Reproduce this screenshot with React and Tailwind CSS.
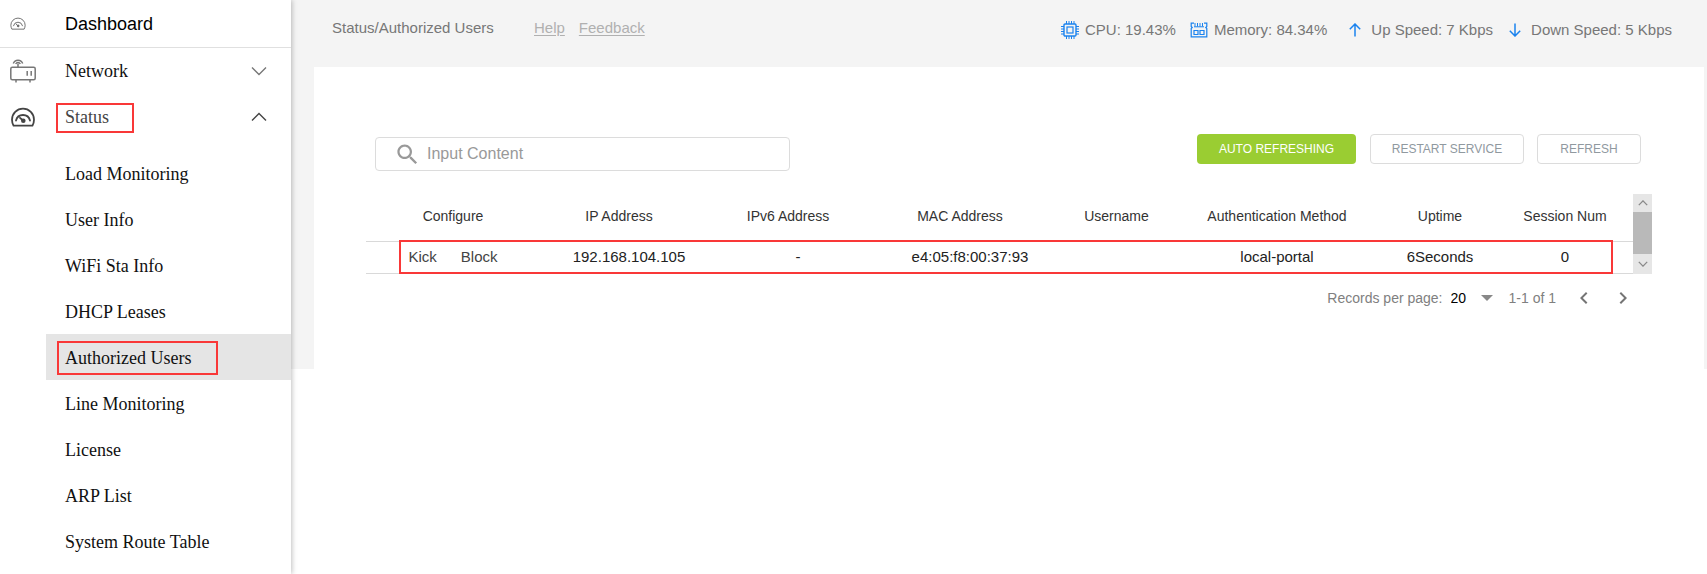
import React, { useState } from "react";

const menuItems = [
  "Load Monitoring",
  "User Info",
  "WiFi Sta Info",
  "DHCP Leases",
  "Authorized Users",
  "Line Monitoring",
  "License",
  "ARP List",
  "System Route Table",
];

const columns = [
  { label: "Configure", width: "w-[174px]" },
  { label: "IP Address", width: "w-[178px]", head: "pr-5" },
  { label: "IPv6 Address", width: "w-[160px]", head: "pr-5" },
  { label: "MAC Address", width: "w-[164px]" },
  { label: "Username", width: "w-[149px]" },
  { label: "Authentication Method", width: "w-[172px]" },
  { label: "Uptime", width: "w-[154px]" },
  { label: "Session Num", width: "w-[116px]", head: "pr-5" },
];

const users = [
  {
    ip: "192.168.104.105",
    ipv6: "-",
    mac: "e4:05:f8:00:37:93",
    username: "",
    method: "local-portal",
    uptime: "6Seconds",
    sessions: 0,
  },
];

function GaugeIcon({ className, strokeWidth = 1.8 }) {
  return (
    <svg viewBox="0 0 24 20" className={className} fill="none" stroke="currentColor" strokeWidth={strokeWidth} aria-hidden="true">
      <path d="M2.6 18.7h18.8c1-1.8 1.6-3.9 1.600-6a11 11 0 0 0-22 0c0 2.100.6 4.200 1.600 6z" strokeLinejoin="round" />
      <path d="M5 13.500a7.200 7.200 0 0 1 14 0" strokeLinecap="round" />
      <path d="M9 10.800l3 2.700" strokeLinecap="round" />
      <circle cx="12.300" cy="13.700" r="1.400" fill="currentColor" />
    </svg>
  );
}

function RouterIcon({ className }) {
  return (
    <svg viewBox="0 0 26 24" className={className} fill="none" stroke="currentColor" strokeWidth="1.5" aria-hidden="true">
      <rect x="0.8" y="8.300" width="24.400" height="12.500" rx="1.500" />
      <path d="M17.200 12v4.800M21.200 12v4.800M6 21v2.500M20 21v2.500M8 4.500v3.500" />
      <path d="M3.300 4.500a5 5 0 0 1 9.400 0M5.700 5a2.600 2.600 0 0 1 4.600 0" />
    </svg>
  );
}

function Chevron({ up, className, strokeWidth = 1.4 }) {
  return (
    <svg viewBox="0 0 16 10" className={className} fill="none" stroke="currentColor" strokeWidth={strokeWidth} aria-hidden="true">
      <path d={up ? "M1 8.500l7-7 7 7" : "M1 1.500l7 7 7-7"} />
    </svg>
  );
}

function CpuIcon() {
  return (
    <svg viewBox="0 0 18 18" className="size-[18px] text-[#1a82ee]" fill="none" stroke="currentColor" aria-hidden="true">
      <rect x="3" y="3" width="12" height="12" rx="1" strokeWidth="1.400" />
      <rect x="6" y="6" width="6" height="6" strokeWidth="1.200" />
      <path d="M5.500 0v3M8 0v3M10.500 0v3M13 0v3M5.500 15v3M8 15v3M10.500 15v3M13 15v3M0 5.500h3M0 8h3M0 10.500h3M0 13h3M15 5.500h3M15 8h3M15 10.500h3M15 13h3" />
    </svg>
  );
}

function MemoryIcon() {
  return (
    <svg viewBox="0 0 18 16" className="h-4 w-[18px] text-[#1a82ee]" fill="none" stroke="currentColor" aria-hidden="true">
      <path d="M4 1.200H1.200v3.300l1 1-1 1v8.300h15.600V6.500l-1-1 1-1V1.200H14" strokeWidth="1.200" />
      <path d="M5 1v3.500M7.500 1v3.500M10 1v3.500M12.500 1v3.500M4 4.800h10" />
      <path d="M4 8.500h4v4H4zM10 8.500h4v4h-4z" strokeWidth="1.200" />
    </svg>
  );
}

function ArrowIcon({ down }) {
  return (
    <svg viewBox="0 0 12 14" className="h-3.5 w-3" fill="none" stroke="#1a82ee" strokeWidth="1.500" aria-hidden="true">
      <path d={down ? "M6 .5v12.500M.8 7.800L6 13l5.200-5.200" : "M6 13.500V1M.8 6.200L6 1l5.200 5.200"} />
    </svg>
  );
}

function Sidebar() {
  return (
    <nav className="relative z-10 min-h-screen w-[291px] shrink-0 bg-white font-['Liberation_Serif',serif] text-lg text-[#111] shadow-[1px_0_5px_rgba(0,0,0,0.25)]">
      <a href="#dashboard" className="flex h-12 items-center border-b border-[#e0e0e0] font-['Liberation_Sans',sans-serif] text-black">
        <span className="w-[65px] pl-2.5">
          <GaugeIcon className="h-[13px] w-4 text-[#666]" strokeWidth={1.4} />
        </span>
        Dashboard
      </a>
      <button type="button" className="flex h-[46px] w-full items-center pr-6">
        <span className="w-[65px] pl-2.5">
          <RouterIcon className="h-6 w-[26px] text-[#777]" />
        </span>
        Network
        <Chevron className="ml-auto h-2.5 w-4 text-[#777]" />
      </button>
      <button type="button" aria-expanded="true" className="relative flex h-[46px] w-full items-center pr-6 text-[#444]">
        <span className="w-[65px] pl-[11px]">
          <GaugeIcon className="h-5 w-6" />
        </span>
        Status
        <Chevron up className="ml-auto h-2.5 w-4" />
        <span className="absolute top-[9px] left-14 h-[30px] w-[78px] border-2 border-[#f93838]" />
      </button>
      <ul className="mt-2.5">
        {menuItems.map((item) => (
          <li key={item} className="pl-[46px]">
            <a
              href="#status"
              className={`relative flex h-[46px] items-center pt-0.5 pl-[19px] ${item === "Authorized Users" ? "bg-[#e5e5e5]" : ""}`}
            >
              {item}
              {item === "Authorized Users" && (
                <span className="absolute top-[7px] left-[11px] h-[34px] w-[161px] border-2 border-[#f93838]" />
              )}
            </a>
          </li>
        ))}
      </ul>
    </nav>
  );
}

function TopBar() {
  return (
    <header className="flex h-[67px] items-start justify-between pr-8 pl-[41px] text-[15px] leading-6 text-[#777]">
      <div className="flex pt-4">
        <h1 className="w-[202px]">Status/Authorized Users</h1>
        <a href="#help" className="mr-3.5 text-[#b0b0b0] underline underline-offset-2">Help</a>
        <a href="#feedback" className="text-[#b0b0b0] underline underline-offset-2">Feedback</a>
      </div>
      <div className="flex gap-3.5 pt-[18px]">
        <span className="flex items-center gap-1.5"><CpuIcon />CPU: 19.43%</span>
        <span className="flex items-center gap-1.5"><MemoryIcon />Memory: 84.34%</span>
        <span className="ml-2 flex items-center gap-2.5"><ArrowIcon />Up Speed: 7 Kbps</span>
        <span className="ml-0.5 flex items-center gap-2.5"><ArrowIcon down />Down Speed: 5 Kbps</span>
      </div>
    </header>
  );
}

function UsersTable() {
  return (
    <div className="mx-[52px] flex">
      <div className="relative min-w-0 flex-1">
        <table className="w-full table-fixed border-b border-[#d9d9d9] text-center text-[#222]">
          <thead>
            <tr className="h-[47px] border-b border-[#d9d9d9] text-sm text-[#333]">
              {columns.map((col) => (
                <th key={col.label} className={`pb-0.5 font-normal ${col.width} ${col.head || ""}`}>
                  {col.label}
                </th>
              ))}
            </tr>
          </thead>
          <tbody>
            {users.map((user) => (
              <tr key={user.ip} className="h-8 text-[15px]">
                <td className="text-[#444]">
                  <button type="button" className="mr-6">Kick</button>
                  <button type="button">Block</button>
                </td>
                <td>{user.ip}</td>
                <td>{user.ipv6}</td>
                <td className="pl-5">{user.mac}</td>
                <td>{user.username}</td>
                <td>{user.method}</td>
                <td>{user.uptime}</td>
                <td className="pr-5">{user.sessions}</td>
              </tr>
            ))}
          </tbody>
        </table>
        <span className="pointer-events-none absolute right-5 bottom-0 left-[33px] h-[34px] border-2 border-[#f93838]" />
      </div>
      <div className="flex w-[19px] flex-col bg-[#e6e6e6] text-[#888]">
        <button type="button" aria-label="Scroll up" className="flex h-[18px] items-center justify-center">
          <Chevron up className="h-1.5 w-2.5" strokeWidth={2.2} />
        </button>
        <div className="flex-1 bg-[#b9b9b9]" />
        <button type="button" aria-label="Scroll down" className="flex h-5 items-center justify-center">
          <Chevron className="h-1.5 w-2.5" strokeWidth={2.2} />
        </button>
      </div>
    </div>
  );
}

function Pagination() {
  const [perPage, setPerPage] = useState("20");

  return (
    <div className="mt-3 flex items-center justify-end pr-[69px] text-sm leading-6 text-[#808080]">
      <label htmlFor="per-page" className="mr-2">Records per page:</label>
      <div className="relative mr-4">
        <select
          id="per-page"
          value={perPage}
          onChange={(e) => setPerPage(e.target.value)}
          className="w-[42px] appearance-none bg-transparent text-black"
        >
          <option>20</option>
          <option>50</option>
        </select>
        <svg viewBox="0 0 12 6" className="pointer-events-none absolute top-[9px] right-0 h-1.5 w-3" fill="#888" aria-hidden="true">
          <path d="M0 0h12l-6 6z" />
        </svg>
      </div>
      <span className="mr-4">1-1 of 1</span>
      <button type="button" aria-label="Previous page" className="mr-[15px] p-0">
        <svg viewBox="0 0 24 24" className="size-6" fill="#757575" aria-hidden="true">
          <path d="M15.410 7.410L14 6l-6 6 6 6 1.410-1.410L10.830 12z" />
        </svg>
      </button>
      <button type="button" aria-label="Next page">
        <svg viewBox="0 0 24 24" className="size-6" fill="#757575" aria-hidden="true">
          <path d="M10 6L8.590 7.410 13.170 12l-4.580 4.590L10 18l6-6z" />
        </svg>
      </button>
    </div>
  );
}

function App() {
  const [search, setSearch] = useState("");

  return (
    <div className="flex min-h-screen bg-white font-['Liberation_Sans',Arial,sans-serif]">
      <Sidebar />
      <main className="min-w-0 flex-1">
        <div className="bg-[#f4f4f4] pr-[3px]">
          <TopBar />
          <section className="ml-[23px] bg-white pt-[67px] pb-[59px]">
            <div className="flex items-start justify-between pr-[63px] pl-[61px]">
              <div className="mt-[3px] flex h-[34px] w-[415px] items-center rounded border border-[#dcdcdc] pl-[18px]">
                <svg viewBox="0 0 24 24" className="mr-1.5 size-[27px] shrink-0" fill="#999" aria-hidden="true">
                  <path d="M15.500 14h-.79l-.28-.27C15.410 12.590 16 11.110 16 9.500 16 5.910 13.090 3 9.500 3S3 5.910 3 9.500 5.910 16 9.500 16c1.610 0 3.090-.59 4.230-1.570l.27.28v.79l5 4.990L20.490 19l-4.990-5zm-6 0C7.010 14 5 11.990 5 9.500S7.010 5 9.500 5 14 7.010 14 9.500 11.990 14 9.500 14z" />
                </svg>
                <input
                  type="text"
                  aria-label="Search"
                  placeholder="Input Content"
                  value={search}
                  onChange={(e) => setSearch(e.target.value)}
                  className="min-w-0 flex-1 text-base text-[#333] outline-none placeholder:text-[#999]"
                />
              </div>
              <div className="flex text-xs text-[#90999f]">
                <button type="button" className="mr-3.5 h-[30px] w-[159px] rounded-sm bg-[#9acd32] text-white">
                  AUTO REFRESHING
                </button>
                <button type="button" className="mr-[13px] h-[30px] w-[154px] rounded-sm border border-[#dcdcdc]">
                  RESTART SERVICE
                </button>
                <button type="button" className="h-[30px] w-[104px] rounded-sm border border-[#dcdcdc]">
                  REFRESH
                </button>
              </div>
            </div>
            <div className="mt-[23px]">
              <UsersTable />
              <Pagination />
            </div>
          </section>
        </div>
      </main>
    </div>
  );
}

export default App;
